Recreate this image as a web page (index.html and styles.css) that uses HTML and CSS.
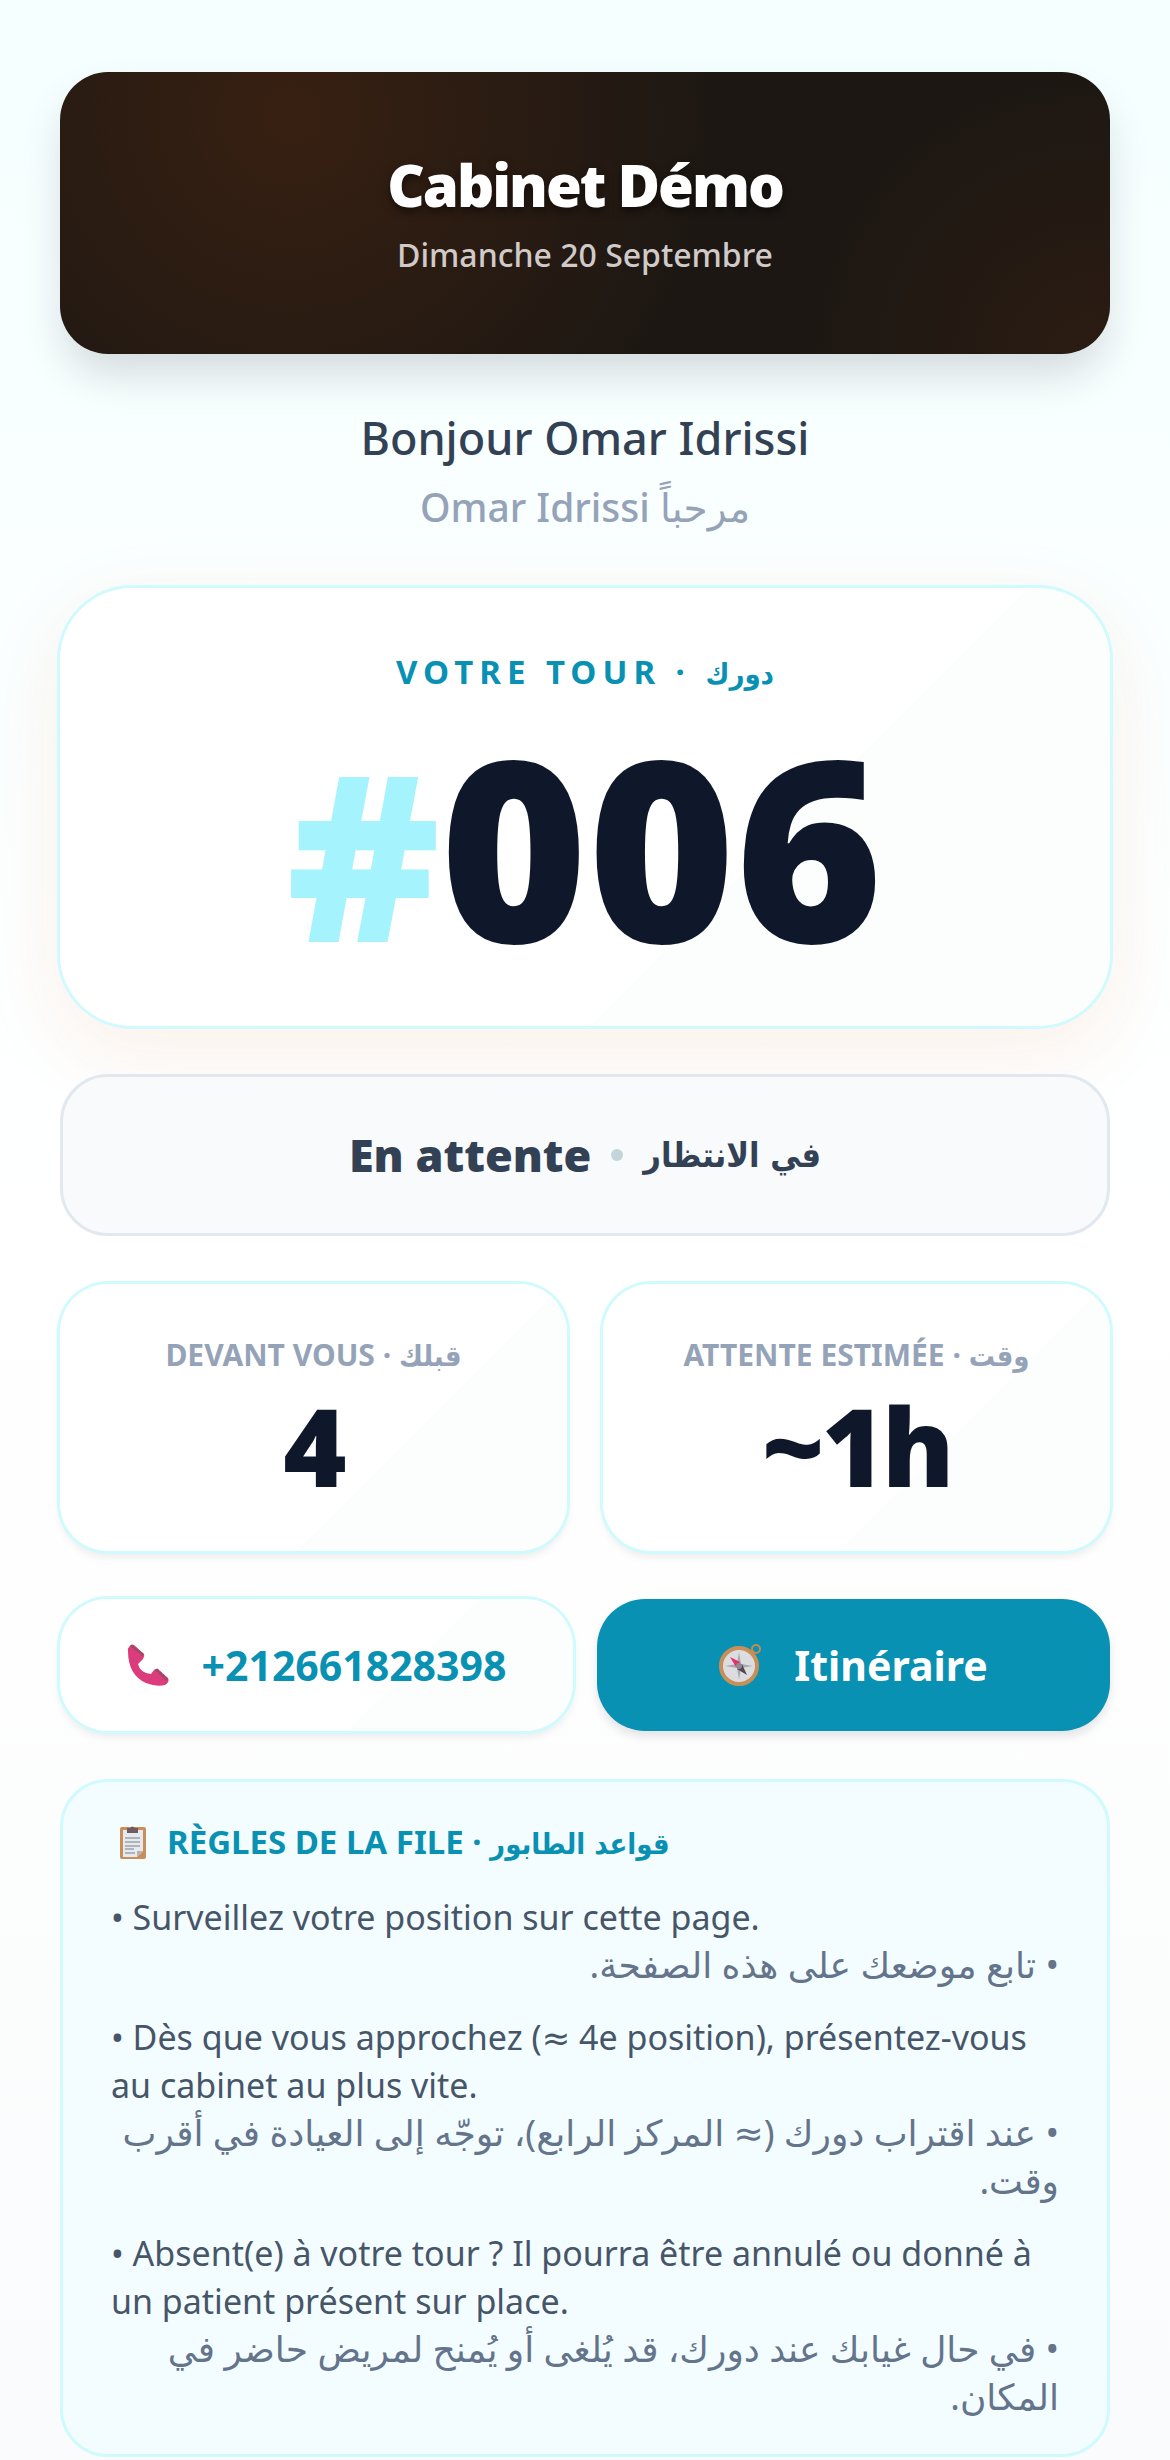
FILE: index.html
```html
<!DOCTYPE html>
<html lang="fr">

<head>
  <meta charset="UTF-8" />
  <meta name="viewport" content="width=device-width, initial-scale=1" />
  <title>Cabinet Démo</title>
  <link rel="stylesheet" href="styles.css">
</head>

<body>
  <main class="page">
    <header class="hero">
      <h1 class="hero-title">Cabinet Démo</h1>
      <p class="hero-date">Dimanche 20 Septembre</p>
    </header>

    <section class="greeting">
      <p class="greeting-fr">Bonjour Omar Idrissi</p>
      <p class="greeting-ar" dir="rtl"><span lang="ar">مرحباً</span> Omar Idrissi</p>
    </section>

    <section class="card ticket">
      <h2 class="ticket-label">VOTRE TOUR · <span class="ar" lang="ar">دورك</span></h2>
      <p class="ticket-number"><span class="hash">#</span>006</p>
    </section>

    <section class="state">
      <span class="state-fr">En attente</span>
      <span class="state-dot"></span>
      <span class="ar" lang="ar" dir="rtl">في الانتظار</span>
    </section>

    <section class="stats">
      <div class="card stat">
        <h2 class="stat-label">DEVANT VOUS · <span class="ar" lang="ar">قبلك</span></h2>
        <p class="stat-value">4</p>
      </div>
      <div class="card stat">
        <h2 class="stat-label">ATTENTE ESTIMÉE · <span class="ar" lang="ar">وقت</span></h2>
        <p class="stat-value">~1h</p>
      </div>
    </section>

    <nav class="actions">
      <a class="card action" href="tel:+212661828398">
        <svg class="action-icon" viewBox="0 0 42 42" aria-hidden="true">
          <path d="M1 7Q0 5 2 3Q4 0 7 1L17 10Q18 12 16 15L11 20Q13 29 24 30L27 26Q29 24 32 26L41 34Q43 38 38 41Q29 43 19 39Q1 31 1 7Z" fill="#dc3c7c" />
          <path d="M5 2L16 11M30 26L40 36" stroke="#9c4a68" stroke-width="3" stroke-linecap="round" stroke-dasharray="1 3" />
        </svg>
        <span>+212661828398</span>
      </a>
      <a class="action action-primary" href="#itineraire">
        <svg class="action-icon" viewBox="0 0 42 42" aria-hidden="true">
          <circle cx="37" cy="5" r="4" fill="none" stroke="#c98a50" stroke-width="2" />
          <path d="M31 11L35 7" stroke="#c98a50" stroke-width="3" />
          <circle cx="20" cy="22" r="18" fill="#dcdde1" stroke="#c98f58" stroke-width="4" />
          <path d="M20 8L22 20L34 22L22 24L20 36L18 24L6 22L18 20Z" fill="#a9a9b0" />
          <path d="M11 13L21 18L17 23Z" fill="#e52f6d" />
          <path d="M28 31L18 25L23 20Z" fill="#574555" />
          <circle cx="20" cy="22" r="3" fill="#918991" />
        </svg>
        <span>Itinéraire</span>
      </a>
    </nav>

    <section class="rules">
      <h2 class="rules-title">
        <svg class="rules-icon" viewBox="0 0 26 33" aria-hidden="true">
          <rect y="1" width="26" height="32" rx="2" fill="#c98f5b" />
          <path d="M3 4H23V25L17 31H3Z" fill="#e6e9ee" />
          <path d="M17 31V25H23Z" fill="#b9b3b3" />
          <path d="M7 2H10Q12 -1 15 2H18V7H7Z" fill="#705a63" />
          <path d="M5 12H20M5 16H20M5 20H20M5 23H14M5 27H15" stroke="#afb3bb" stroke-width="2" />
        </svg>
        <span>RÈGLES DE LA FILE · <span class="ar" lang="ar">قواعد الطابور</span></span>
      </h2>
      <ul class="rules-list">
        <li>
          <p>• Surveillez votre position sur cette page.</p>
          <p class="rule-ar" lang="ar" dir="rtl">• تابع موضعك على هذه الصفحة.</p>
        </li>
        <li>
          <p>• Dès que vous approchez (≈ 4e position), présentez-vous au cabinet au plus vite.</p>
          <p class="rule-ar" lang="ar" dir="rtl">• عند اقتراب دورك (≈ المركز الرابع)، توجّه إلى العيادة في أقرب وقت.</p>
        </li>
        <li>
          <p>• Absent(e) à votre tour ? Il pourra être annulé ou donné à un patient présent sur place.</p>
          <p class="rule-ar" lang="ar" dir="rtl">• في حال غيابك عند دورك، قد يُلغى أو يُمنح لمريض حاضر في المكان.</p>
        </li>
      </ul>
    </section>
  </main>
</body>

</html>
```
FILE: styles.css
```css
:root {
  --teal: #0891b2;
  --ring: #cffafe;
  --ink: #0f172a;
  --slate: #334155;
  --muted: #94a3b8;
  --radius: 48px;
}

* {
  box-sizing: border-box;
  margin: 0;
  padding: 0;
}

body {
  min-height: 100vh;
  background: linear-gradient(#f5ffff, #fff 50%, #fafbfc);
  color: var(--slate);
  font-family: "Segoe UI", "Noto Sans", "DejaVu Sans", sans-serif;
}

.page {
  display: flex;
  flex-direction: column;
  gap: 48px;
  padding: 72px 60px 0;
}

.card {
  background: linear-gradient(135deg, #fff 65%, #fcfefe 65%);
  box-shadow: 0 0 0 3px var(--ring), 0 6px 8px rgba(15, 23, 42, 0.08);
  border-radius: var(--radius);
}

/* bold Arabic runs wide next to the Latin labels */
.ar {
  font-family: "DejaVu Sans Condensed", "DejaVu Sans", sans-serif;
  font-weight: 700;
  font-size: 29px;
  line-height: 1;
}

.hero {
  padding: 72px 48px 69px;
  border-radius: var(--radius);
  text-align: center;
  color: #fff;
  background:
    radial-gradient(circle at 22% 15%, rgba(120, 53, 15, 0.3), transparent 440px),
    radial-gradient(circle at 98% 100%, rgba(120, 53, 15, 0.16), transparent 300px),
    #1c1713;
  box-shadow: 0 24px 45px -6px rgba(15, 23, 42, 0.17);
}

.hero-title {
  font-size: 58px;
  font-weight: 900;
  line-height: 81px;
  letter-spacing: -2px;
  text-shadow: 0 4px 8px rgba(0, 0, 0, 0.5);
}

.hero-date {
  font-size: 32px;
  font-weight: 500;
  line-height: 60px;
  color: #d0cac8;
}

.greeting {
  text-align: center;
}

.greeting-fr {
  font-size: 45px;
  font-weight: 500;
  line-height: 72px;
}

.greeting-ar {
  font-size: 39px;
  font-weight: 500;
  line-height: 66px;
  color: var(--muted);
}

.ticket {
  padding: 60px 48px 39px;
  border-radius: 72px;
  text-align: center;
  box-shadow: 0 0 0 3px var(--ring), 0 24px 75px 9px rgba(234, 88, 12, 0.08);
}

.ticket-label {
  margin-bottom: 6px;
  font-size: 33px;
  font-weight: 700;
  line-height: 48px;
  letter-spacing: 6px;
  color: var(--teal);
}

.ticket-number {
  font-size: 252px;
  font-weight: 900;
  line-height: 285px;
  color: var(--ink);
}

.hash {
  font-size: 231px;
  line-height: 1;
  color: #a5f3fc;
}

.state {
  display: flex;
  align-items: center;
  justify-content: center;
  gap: 20px;
  padding: 48px;
  border: 3px solid #e2e8f0;
  border-radius: var(--radius);
  background: #f8fafc;
  font-size: 45px;
  line-height: 60px;
}

.state-fr {
  font-weight: 900;
}

.state-dot {
  width: 12px;
  height: 12px;
  border-radius: 50%;
  background: #c2d5d8;
}

.state .ar {
  font-size: 34px;
}

.stats {
  display: grid;
  grid-template-columns: 1fr 1fr;
  gap: 36px;
}

.stat {
  padding: 48px 24px 36px;
  text-align: center;
}

.stat-label {
  font-size: 30px;
  font-weight: 700;
  line-height: 45px;
  color: var(--muted);
}

.stat-value {
  font-size: 108px;
  font-weight: 900;
  line-height: 138px;
  letter-spacing: -3px;
  color: var(--ink);
}

.actions {
  display: grid;
  grid-template-columns: 1fr 1fr;
  gap: 24px;
}

.action {
  display: flex;
  align-items: center;
  justify-content: center;
  gap: 33px;
  padding: 36px 24px;
  border-radius: var(--radius);
  font-size: 41px;
  font-weight: 700;
  line-height: 60px;
  color: var(--teal);
  text-decoration: none;
}

.action-primary {
  background: var(--teal);
  color: #fff;
  box-shadow: 0 6px 8px rgba(15, 23, 42, 0.1);
}

.action-icon {
  flex: none;
  width: 42px;
  height: 42px;
  overflow: visible;
}

.rules {
  padding: 36px 48px 33px;
  border: 3px solid var(--ring);
  border-radius: var(--radius);
  background: #f3fdff;
}

.rules-title {
  display: flex;
  align-items: center;
  gap: 21px;
  padding-left: 9px;
  font-size: 33px;
  font-weight: 700;
  line-height: 48px;
  color: var(--teal);
}

.rules-icon {
  width: 26px;
  height: 33px;
}

.rules-list {
  display: grid;
  gap: 24px;
  margin-top: 27px;
  list-style: none;
  font-size: 34px;
  line-height: 48px;
  color: #475569;
}

.rule-ar {
  font-size: 36px;
  color: #64748b;
}
```
